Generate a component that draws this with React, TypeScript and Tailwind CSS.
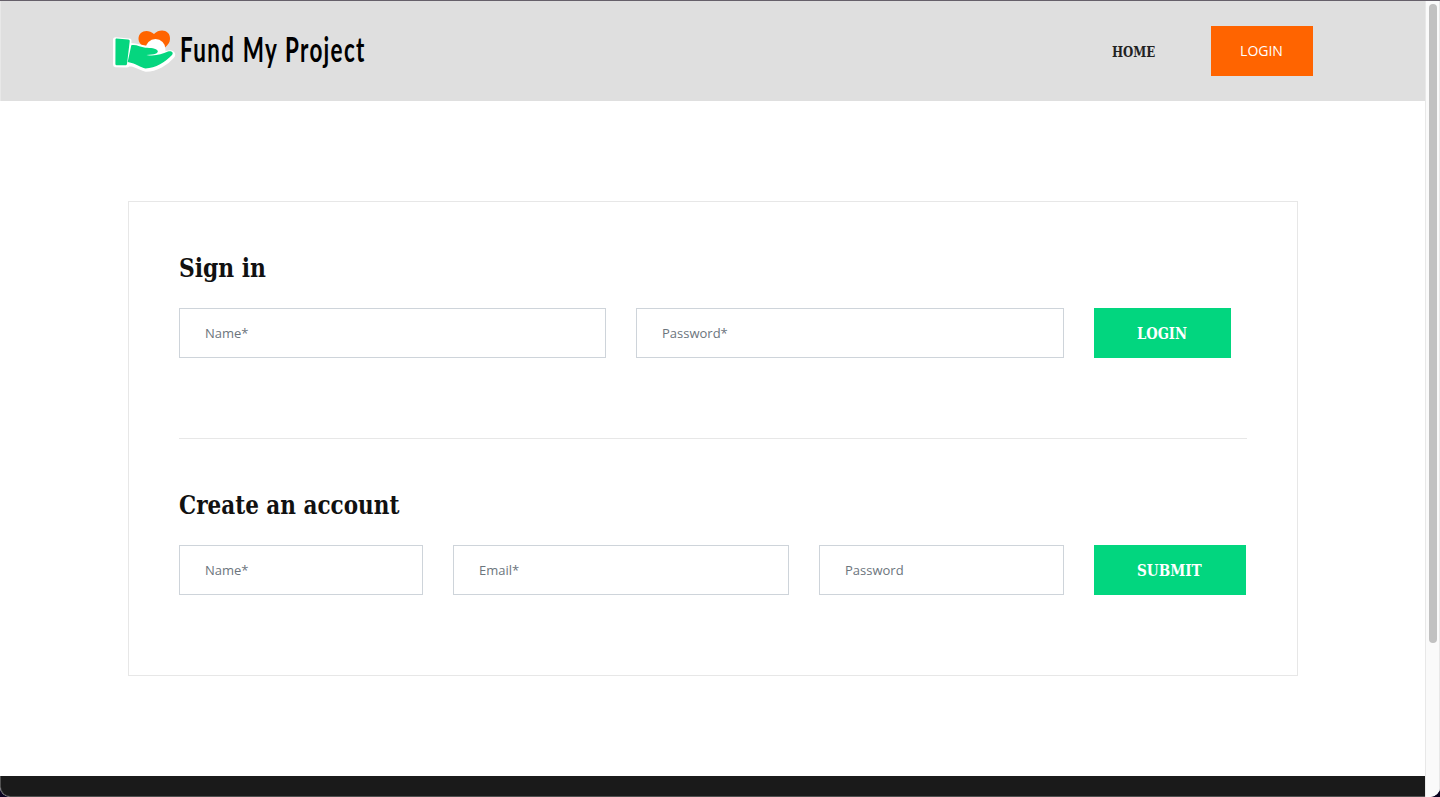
import React from "react";

function Logo() {
  return (
    <a className="flex h-[60px] w-[270px] items-start" aria-label="Fund My Project">
      <svg width="66" height="60" viewBox="0 0 66 60" className="shrink-0">
        <path
          d="M41.500 34C34 28 25.500 24 25.500 18c0-8 9-10.500 15.500-5 6-6 16.500-4 16 5-.1 7-8 10-15.500 16z"
          fill="#ff6400"
        />
        <circle cx="42.500" cy="28" r="10" fill="#fff" />
        <path
          d="M2.500 18.700 16 20l-2 24-11.500-.2zM18.300 24.500c7 .5 11 3 18 3 5 0 9 1.500 8.800 3.500l9 1.500c4-2 7 .5 5 2.500-6 7-16 13.200-26 13.200-6-1-9-5-18.500-6z"
          fill="#fff"
          stroke="#fff"
          strokeWidth="5"
          strokeLinejoin="round"
        />
        <path
          d="M2.500 18.500c0-.5.500-.9 1-.9l11.500 1c1.500.2 2 .8 1.700 2L14 43c-.2.900-.8 1.300-1.600 1.300H3.500c-.8 0-1.100-.4-1.100-1.200z"
          fill="#05d67f"
        />
        <path
          d="M18.300 24.200c5-1 9 1.800 14 2.500 5 .3 11 .2 12.500 3.300.4 2.300-2.800 3.800-11.500 4 9 1.600 15.200-.8 21.700-3.400 3.500-1 6 1 4 3.500-6.500 7-16.500 13.400-26.500 13.400-5-.8-9-4.700-17.800-6.400z"
          fill="#05d67f"
        />
      </svg>
      <span className="mt-[8px] ml-[1px] inline-block origin-left scale-x-[0.66] whitespace-nowrap font-['Lato',sans-serif] text-[34px] leading-[40px] font-bold tracking-[2px] text-black [word-spacing:1px]">
        Fund My Project
      </span>
    </a>
  );
}

function Slab({ children, className }: { children: React.ReactNode; className: string }) {
  return (
    <span className={"inline-block whitespace-nowrap font-['Roboto_Slab','DejaVu_Serif',serif] font-bold " + className}>
      {children}
    </span>
  );
}

function Field({ label, type = "text", className }: { label: string; type?: string; className: string }) {
  return (
    <input
      type={type}
      placeholder={label}
      aria-label={label}
      className={
        "h-[50px] shrink-0 border border-[#ced4da] bg-white px-[25px] font-['Open_Sans',sans-serif] text-[13px] text-[#495057] outline-none placeholder:text-[#6c757d] placeholder:opacity-100 " +
        className
      }
    />
  );
}

export default function App() {
  return (
    <div className="h-[797px] overflow-hidden bg-[#0b0420]">
      <div className="flex h-full overflow-hidden rounded-b-[10px] border-t border-[#66606a] bg-white">
        <div className="flex w-[1425px] shrink-0 flex-col">
          <header className="flex h-[100px] shrink-0 items-center justify-between border-l border-[#e8e8e8] bg-[#dfdfdf] pr-[112px] pl-[112px]">
            <Logo />
            <nav className="flex items-center">
              <a className="mr-[54px] flex w-[45px] pt-[1px]">
                <Slab className="origin-left scale-x-[0.84] text-[14px] leading-[20px] text-[#222]">HOME</Slab>
              </a>
              <a className="flex h-[50px] w-[102px] items-center justify-center bg-[#ff6400] pr-[1px] font-['Open_Sans',sans-serif] text-[14px] leading-[20px] font-medium text-white">
                LOGIN
              </a>
            </nav>
          </header>
          <main className="grow px-[128px] pt-[100px]">
            <div className="h-[475px] w-[1170px] border border-[#e7e7e7] px-[50px] pt-[50px]">
              <form className="flex h-[187px] flex-col border-b border-[#e7e7e7]">
                <h2 className="h-[56px] w-[400px]">
                  <Slab className="origin-left scale-x-[0.84] text-[26px] leading-[32px] text-[#111]">Sign in</Slab>
                </h2>
                <div className="flex gap-[30px]">
                  <Field label="Name*" className="w-[427px]" />
                  <Field label="Password*" type="password" className="w-[428px]" />
                  <button type="button" className="flex h-[50px] w-[137px] shrink-0 items-center bg-[#02d67f] pt-[2px] pl-[43px]">
                    <Slab className="origin-left scale-x-[0.82] text-[16px] leading-[24px] text-white">LOGIN</Slab>
                  </button>
                </div>
              </form>
              <form className="flex flex-col pt-[50px]">
                <h2 className="h-[56px] w-[400px]">
                  <Slab className="origin-left scale-x-[0.829] text-[26px] leading-[32px] text-[#111]">
                    Create an account
                  </Slab>
                </h2>
                <div className="flex gap-[30px]">
                  <Field label="Name*" className="w-[244px]" />
                  <Field label="Email*" className="w-[336px]" />
                  <Field label="Password" type="password" className="w-[245px]" />
                  <button type="button" className="flex h-[50px] w-[152px] shrink-0 items-center bg-[#02d67f] pt-[2px] pl-[43px]">
                    <Slab className="origin-left scale-x-[0.85] text-[16px] leading-[24px] text-white">SUBMIT</Slab>
                  </button>
                </div>
              </form>
            </div>
          </main>
          <footer className="h-[21px] shrink-0 rounded-bl-[10px] border-b border-l border-[#505050] bg-[#1a1a1a]" />
        </div>
        <div className="w-[15px] shrink-0 border-r border-l border-[#e8e8e8] bg-[#fafafa] pt-[3px] pl-[3px]">
          <div className="h-[639px] w-[8px] rounded-full bg-[#c1c1c1]" />
        </div>
      </div>
    </div>
  );
}
